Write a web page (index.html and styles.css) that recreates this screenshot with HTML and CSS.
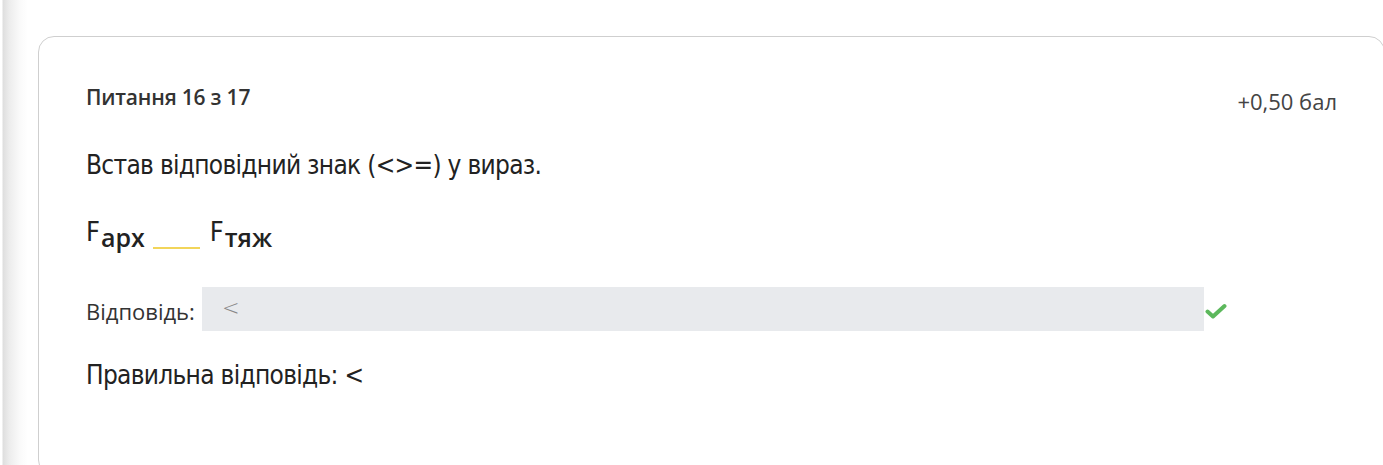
FILE: index.html
```html
<!DOCTYPE html>
<html lang="uk">
<head>
<meta charset="utf-8">
<link rel="stylesheet" href="styles.css">
</head>
<body>
<div class="page">
  <div class="shade"></div>
  <div class="wrap">
    <section class="card">
      <header class="card-head">
        <div class="q-num">Питання 16 з 17</div>
        <div class="q-score">+0,50 бал</div>
      </header>
      <p class="q-text">Встав відповідний знак (&lt;&gt;=) у вираз.</p>
      <p class="formula"><span class="f">F</span><span class="sub">арх</span><span class="blank"></span><span class="f">F</span><span class="sub">тяж</span></p>
      <div class="answer-row">
        <span class="answer-label">Відповідь:</span>
        <div class="answer-box"><span class="answer-val">&lt;</span></div>
        <svg class="check" width="22" height="16" viewBox="0 0 22 16"><path d="M2.5 8.5 L8 13.5 L19.5 3" fill="none" stroke="#5cb85c" stroke-width="4" stroke-linecap="round" stroke-linejoin="round"/></svg>
      </div>
      <p class="correct">Правильна відповідь: &lt;</p>
    </section>
  </div>
</div>
</body>
</html>
```
FILE: styles.css
```css
html, body {
  margin: 0;
  padding: 0;
  background: #fff;
  overflow: hidden;
}
body {
  font-family: "Open Sans", sans-serif;
  color: #333;
}
.page {
  display: flex;
  height: 465px;
  overflow: hidden;
}
.shade {
  width: 28px;
  flex: none;
  background: linear-gradient(to right, #fff 0, #fff 2px, #dedede 3px, #ececec 9px, #fafafa 20px, #fff 28px);
}
.wrap {
  padding-top: 36px;
  padding-left: 10px;
  flex: 1;
  min-width: 0;
}
.card {
  width: 1347px;
  height: 440px;
  border: 1px solid #cfcfcf;
  border-radius: 16px;
  padding: 46px 47px 0 47px;
  box-sizing: border-box;
}
.card-head {
  display: flex;
  justify-content: space-between;
  align-items: flex-start;
}
.q-num {
  font-size: 21px;
  font-weight: 600;
  line-height: 28px;
  color: #333;
  letter-spacing: -0.2px;
}
.q-score {
  font-size: 22px;
  line-height: 28px;
  margin-top: 4px;
  color: #444;
}
.q-text,
.correct {
  font-family: "DejaVu Sans", sans-serif;
  font-stretch: condensed;
  font-size: 26px;
  line-height: 36px;
  letter-spacing: -0.7px;
  color: #222;
}
.q-text {
  margin: 32px 0 0;
}
.formula {
  margin: 36px 0 0;
  font-size: 25px;
  line-height: 36px;
  height: 36px;
  color: #222;
}
.f {
  font-family: "DejaVu Sans", sans-serif;
  font-stretch: condensed;
  font-size: 27px;
  line-height: 20px;
  vertical-align: 6px;
}
.sub {
  font-weight: 600;
  margin-left: 1px;
}
.blank {
  display: inline-block;
  width: 47px;
  height: 2px;
  background: #f2d55a;
  margin: 0 10px 0 8px;
  vertical-align: -2px;
}
.answer-row {
  display: flex;
  align-items: center;
  margin-top: 32px;
}
.answer-label {
  font-size: 22px;
  line-height: 30px;
  color: #333;
  margin-right: 7px;
  margin-top: 4px;
}
.answer-box {
  width: 1002px;
  height: 44px;
  background: #e8eaed;
  display: flex;
  align-items: center;
  padding-left: 20px;
  box-sizing: border-box;
}
.answer-val {
  font-family: "DejaVu Sans", sans-serif;
  font-weight: 200;
  font-size: 21px;
  color: #888;
  margin-top: -3px;
}
.check {
  margin-left: 1px;
  margin-top: 3px;
}
.correct {
  margin: 26px 0 0;
}
```
